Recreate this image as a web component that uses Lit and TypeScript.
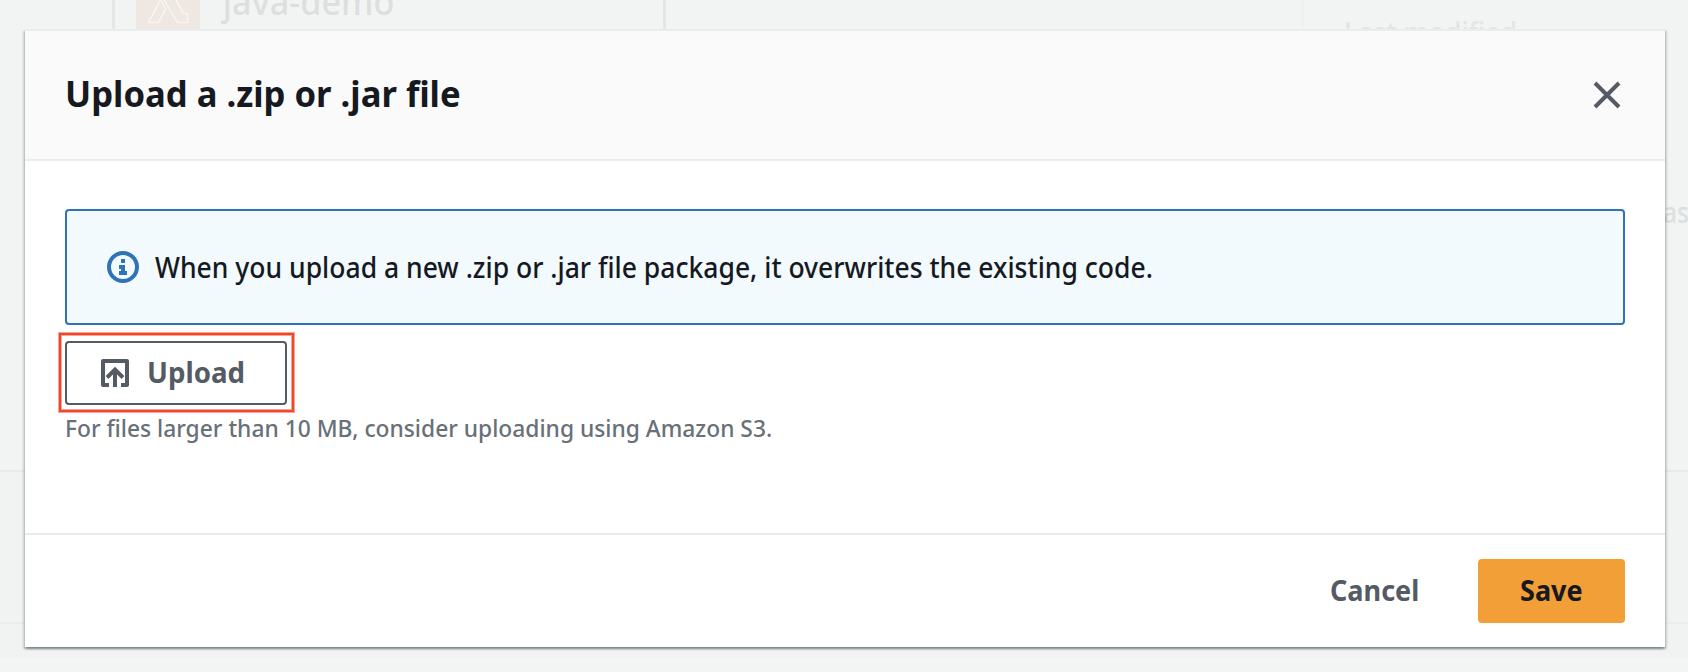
import { LitElement, html, css } from "lit";
import { customElement } from "lit/decorators.js";

@customElement("function-backdrop")
export class FunctionBackdrop extends LitElement {
  static styles = css`
    :host { display: block; overflow: hidden; background: #f2f4f4; color: #dddfdf; }
    .page { display: flex; flex-direction: column; height: 672px; box-sizing: border-box; }
    .diagram { display: flex; height: 470px; box-sizing: border-box; overflow: hidden; }
    .node {
      display: flex; flex: none; margin-left: 112px; width: 554px; height: 29px; box-sizing: border-box;
      border: solid #e3e6e6; border-width: 0 3px; padding-left: 21px; gap: 20px; overflow: hidden;
    }
    .tile { width: 64px; height: 29px; background: #efe7e1; flex: none; }
    .tile svg { display: block; }
    .name { font-size: 36px; font-weight: 500; line-height: 48px; height: 48px; margin-top: -22px; white-space: nowrap; transform: scaleX(.95); transform-origin: 0 0; padding-left: 3px; }
    .details { flex: none; margin-left: 636px; border-left: 2px solid #eff1f1; padding: 12px 0 0 40px; height: 460px; box-sizing: border-box; }
    .label { font-size: 28px; font-weight: 500; line-height: 40px; white-space: nowrap; transform: scaleX(.95); transform-origin: 0 0; color: #e3e5e5; }
    .value { margin: 140px 0 0 319px; font-size: 28px; font-weight: 500; line-height: 40px; color: #dddfdf; transform: scaleX(.88); transform-origin: 0 0; }
    .section { border-top: 2px solid #e8eaea; background: #f1f3f3; height: 152px; box-sizing: border-box; }
    .section.last { border-color: #ebeded; height: 36px; }
    .rest { flex: 1; background: #f3f5f4; }
  `;
  render() {
    return html`<div class="page">
      <div class="diagram">
        <div class="node">
          <div class="tile">
            <svg width="64" height="29" viewBox="0 0 64 29" fill="none" stroke="#f7f5f2" stroke-width="1.6">
              <path d="M24-2 29.5 9.5 22.5 22.5H12.5L25-1M27-2 41.5 22.5H51.5V13.5H47.5L39-2" />
            </svg>
          </div>
          <div class="name">java-demo</div>
        </div>
        <div class="details">
          <div class="label">Last modified</div>
          <div class="value">ast</div>
        </div>
      </div>
      <div class="section"></div>
      <div class="section last"></div>
      <div class="rest"></div>
    </div>`;
  }
}

@customElement("upload-dialog")
export class UploadDialog extends LitElement {
  static styles = css`
    :host {
      display: flex; flex-direction: column; box-sizing: border-box; background: #fff; color: #16191f;
      box-shadow: 0 2px 2px 0 rgba(0, 28, 36, .3), 2px 2px 2px 0 rgba(0, 28, 36, .15), -2px 2px 2px 0 rgba(0, 28, 36, .15);
    }
    button { font: inherit; border: 0; background: none; margin: 0; padding: 0; color: inherit; }
    svg { display: block; flex: none; }
    .header {
      display: flex; align-items: center; justify-content: space-between; height: 132px; box-sizing: border-box;
      padding: 0 44px 0 40px; background: #fafafa; border: solid #eaeded; border-width: 2px 0;
    }
    h2 { margin: 0 0 2px; font-size: 36px; line-height: 44px; font-weight: 700; }
    .fit { display: inline-block; white-space: nowrap; transform-origin: 0 50%; }
    .fit-title { transform: scaleX(.962); }
    .fit-body { transform: scaleX(.947); }
    .fit-hint { transform: scaleX(.9495); }
    .fit-action { transform: scaleX(.966); }
    .fit-upload { transform: scaleX(.988); }
    .body { flex: 1; padding: 48px 40px 0; display: flex; flex-direction: column; align-items: flex-start; }
    .alert {
      display: flex; align-items: center; gap: 16px; align-self: stretch; height: 116px; box-sizing: border-box;
      padding: 0 40px; border: 2px solid #2e73b8; border-radius: 4px; background: #f2fafd;
      font-size: 28px; line-height: 44px; font-weight: 500;
    }
    .alert .fit { margin-bottom: 1px; }
    .highlight {
      margin: 8px 0 0 -6px; border: 2px solid #ee472a; box-shadow: 0 0 0 1px #f9a496, inset 0 0 0 1px #f9a496;
      padding: 6px 5px 5px 4px; width: 235px; height: 79px; box-sizing: border-box;
    }
    .upload {
      display: flex; align-items: center; gap: 18px; width: 222px; height: 64px; box-sizing: border-box;
      border: 2px solid #545b64; border-radius: 4px; padding-left: 34px;
      font-size: 28px; line-height: 40px; font-weight: 700; color: #545b64;
    }
    .upload .fit { margin-bottom: 2px; }
    .hint { font-size: 24px; line-height: 32px; font-weight: 500; color: #687078; }
    .footer {
      display: flex; align-items: center; justify-content: flex-end; gap: 20px; height: 114px; box-sizing: border-box;
      border-top: 2px solid #eaeaea; padding: 0 40px 0; font-size: 28px; line-height: 40px; font-weight: 700;
    }
    .footer button { height: 64px; border-radius: 4px; text-align: left; padding: 0 0 2px 42px; }
    .footer .cancel { width: 169px; color: #545b64; padding-left: 41px; }
    .save { width: 147px; background: #f29f38; color: #16191f; }
  `;
  render() {
    return html`
      <div class="header">
        <h2><span class="fit fit-title">Upload a .zip or .jar file</span></h2>
        <button aria-label="Close">
          <svg width="28" height="28" viewBox="0 0 28 28" fill="none" stroke="#545b64" stroke-width="4"><path d="M2 2 26 26M26 2 2 26" /></svg>
        </button>
      </div>
      <div class="body">
        <div class="alert">
          <svg width="32" height="32" viewBox="0 0 32 32">
            <circle cx="16" cy="16" r="14" fill="none" stroke="#2e73b8" stroke-width="4" />
            <path fill="#2e73b8" d="M14 8h4v4h-4zM12 14h6v6h2v4h-8v-4h2v-2h-2z" />
          </svg>
          <span class="fit fit-body">When you upload a new .zip or .jar file package, it overwrites the existing code.</span>
        </div>
        <div class="highlight">
          <button class="upload">
            <svg width="28" height="28" viewBox="0 0 28 28" fill="none" stroke="#545b64" stroke-width="4">
              <path stroke-linejoin="round" d="M8 26H2V2H26V26H20" />
              <path d="M14 28V10M6 18.5 14 10.5 22 18.5" />
            </svg>
            <span class="fit fit-upload">Upload</span>
          </button>
        </div>
        <div class="hint"><span class="fit fit-hint">For files larger than 10 MB, consider uploading using Amazon S3.</span></div>
      </div>
      <div class="footer">
        <button class="cancel"><span class="fit fit-action">Cancel</span></button>
        <button class="save"><span class="fit fit-action">Save</span></button>
      </div>`;
  }
}

@customElement("app-root")
export class AppRoot extends LitElement {
  static styles = css`
    :host { display: grid; width: 1688px; height: 672px; overflow: hidden; font-family: "Noto Sans", "Open Sans", sans-serif; }
    function-backdrop, upload-dialog { grid-area: 1 / 1; min-width: 0; }
    upload-dialog { margin: 29px 23px 25px 25px; z-index: 1; }
  `;
  render() {
    return html`<function-backdrop></function-backdrop><upload-dialog></upload-dialog>`;
  }
}
